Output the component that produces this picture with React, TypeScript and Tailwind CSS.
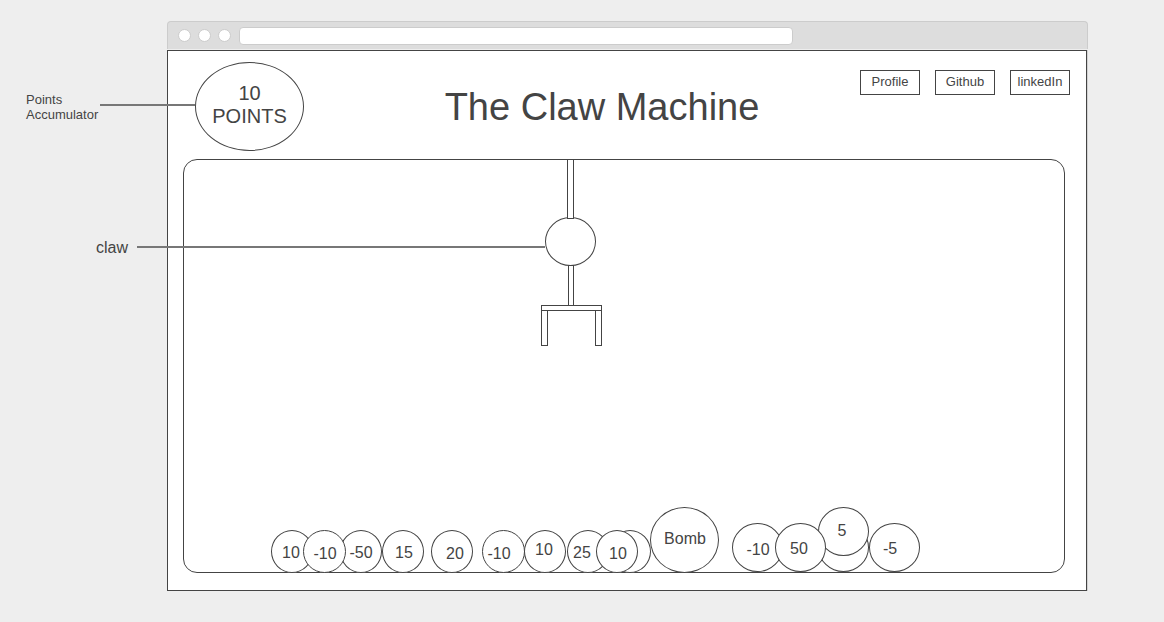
import React from "react";

type Box = { x: number; y: number; w: number; h: number; round?: boolean };
type Ball = Box & { label?: { text: string; cx: number; y: number } };

// Scene coordinates are measured from the inner corner of the play field.
const clawParts: Box[] = [
  { x: 361, y: 57, w: 51, h: 49, round: true },
  { x: 383, y: -1, w: 7, h: 60 },
  { x: 384, y: 105, w: 6, h: 41 },
  { x: 357, y: 150, w: 7, h: 36 },
  { x: 411, y: 150, w: 7, h: 36 },
  { x: 357, y: 145, w: 61, h: 6 },
];

const balls: Ball[] = [
  { x: 87, y: 370, w: 42, h: 43, label: { text: "10", cx: 107, y: 383 } },
  { x: 156, y: 370, w: 42, h: 43, label: { text: "-50", cx: 177, y: 383 } },
  { x: 119, y: 370, w: 43, h: 43, label: { text: "-10", cx: 141, y: 384 } },
  { x: 198, y: 370, w: 42, h: 43, label: { text: "15", cx: 220, y: 383 } },
  { x: 247, y: 370, w: 42, h: 43, label: { text: "20", cx: 271, y: 384 } },
  { x: 298, y: 370, w: 43, h: 43, label: { text: "-10", cx: 315, y: 384 } },
  { x: 340, y: 370, w: 42, h: 43, label: { text: "10", cx: 360, y: 380 } },
  { x: 383, y: 370, w: 42, h: 43, label: { text: "25", cx: 398, y: 383 } },
  { x: 425, y: 370, w: 42, h: 43 },
  { x: 412, y: 370, w: 42, h: 43, label: { text: "10", cx: 434, y: 384 } },
  { x: 466, y: 347, w: 69, h: 66, label: { text: "Bomb", cx: 501, y: 369 } },
  { x: 548, y: 363, w: 51, h: 49, label: { text: "-10", cx: 574, y: 380 } },
  { x: 634, y: 363, w: 51, h: 49 },
  { x: 634, y: 347, w: 51, h: 49, label: { text: "5", cx: 658, y: 361 } },
  { x: 591, y: 363, w: 51, h: 49, label: { text: "50", cx: 615, y: 379 } },
  { x: 685, y: 363, w: 51, h: 49, label: { text: "-5", cx: 706, y: 379 } },
];

const links = ["Profile", "Github", "linkedIn"];

function Shape({ x, y, w, h, round }: Box) {
  return (
    <div
      className={
        round
          ? "absolute rounded-[50%] border border-[#444] bg-white"
          : "absolute border border-[#444] bg-white"
      }
      style={{ left: x, top: y, width: w, height: h }}
    />
  );
}

function BallItem({ label, ...box }: Ball) {
  return (
    <>
      <Shape {...box} round />
      {label && (
        <span
          className="absolute w-12 text-center text-base leading-5"
          style={{ left: label.cx - 24, top: label.y }}
        >
          {label.text}
        </span>
      )}
    </>
  );
}

function BrowserBar() {
  return (
    <div className="mb-px flex h-7 items-center rounded-t border border-b-0 border-[#ccc] bg-[#ddd] pr-[294px] pl-2.5">
      <div className="flex gap-[7px]">
        <span className="size-[13px] rounded-full border border-[#ccc] bg-white" />
        <span className="size-[13px] rounded-full border border-[#ccc] bg-white" />
        <span className="size-[13px] rounded-full border border-[#ccc] bg-white" />
      </div>
      <input
        type="text"
        aria-label="Address"
        className="ml-2 h-[18px] min-w-0 flex-1 rounded border border-[#ccc] bg-white px-2 text-xs outline-none"
      />
    </div>
  );
}

function Header() {
  return (
    <header className="flex items-start pr-4 pl-[27px]">
      <div className="flex h-[89px] w-[109px] shrink-0 flex-col items-center justify-center rounded-[50%] border border-[#444] pb-1 text-center text-xl leading-[23px]">
        <span>10</span>
        <span>POINTS</span>
      </div>
      <h1 className="flex-1 pt-6 pl-10 text-center text-[38px] leading-[42px]">
        The Claw Machine
      </h1>
      <nav className="mt-2 flex shrink-0 gap-[15px]">
        {links.map((name) => (
          <a
            key={name}
            href="#"
            className="h-[25px] w-[60px] border border-[#444] text-center text-[13px] leading-[22px]"
          >
            {name}
          </a>
        ))}
      </nav>
    </header>
  );
}

export default function App() {
  return (
    <div className="relative min-h-screen bg-[#eee] pt-[21px] pr-[76px] pb-8 pl-[167px] font-['Liberation_Sans',Arial,sans-serif] text-[#444]">
      <BrowserBar />
      <div className="border-r border-[#d2d2d2]">
        <main className="border border-[#444] bg-white pt-[11px] pb-[17px]">
          <Header />
          <section
            aria-label="Play field"
            className="relative mt-2 mr-[21px] ml-[15px] h-[414px] rounded-[14px] border border-[#444]"
          >
            {clawParts.map((part, i) => (
              <Shape key={i} {...part} />
            ))}
            {balls.map((ball, i) => (
              <BallItem key={i} {...ball} />
            ))}
          </section>
        </main>
      </div>

      <p className="absolute top-[92px] left-[26px] text-[13px] leading-[15px]">
        Points
        <br />
        Accumulator
      </p>
      <div className="absolute top-[104px] left-[100px] h-0.5 w-[95px] bg-[#777]" />
      <p className="absolute top-[238px] left-24 text-base leading-5">claw</p>
      <div className="absolute top-[246px] left-[137px] h-0.5 w-[408px] bg-[#777]" />
    </div>
  );
}
